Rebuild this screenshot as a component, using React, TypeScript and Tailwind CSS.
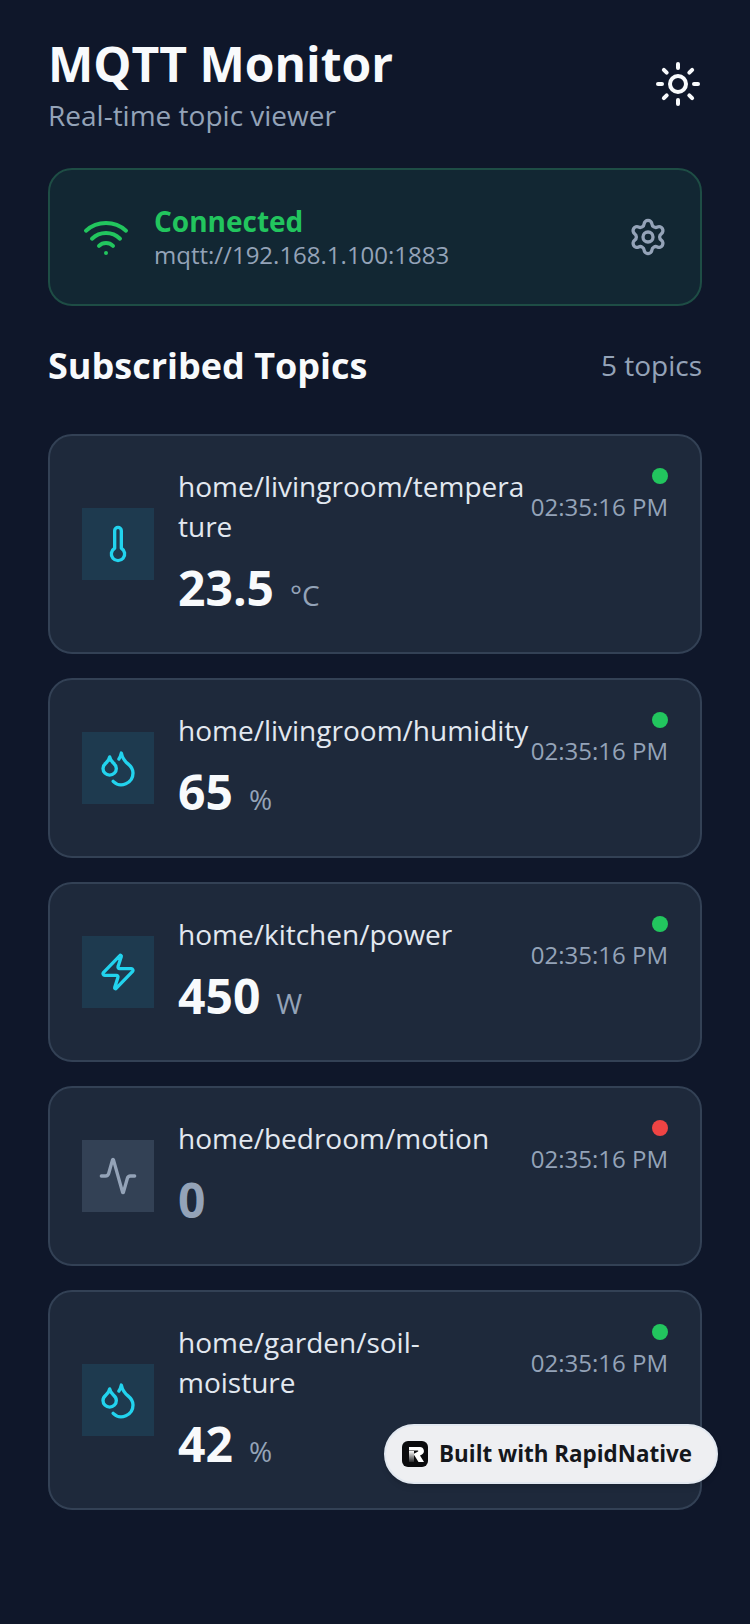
import { Activity, Droplets, Settings, Sun, Thermometer, Wifi, Zap } from 'lucide-react';

const topics = [
  { topic: 'home/livingroom/temperature', value: '23.5', unit: '°C', Icon: Thermometer, active: true },
  { topic: 'home/livingroom/humidity', value: '65', unit: '%', Icon: Droplets, active: true },
  { topic: 'home/kitchen/power', value: '450', unit: 'W', Icon: Zap, active: true },
  { topic: 'home/bedroom/motion', value: '0', unit: '', Icon: Activity, active: false },
  { topic: 'home/garden/soil-moisture', value: '42', unit: '%', Icon: Droplets, active: true },
];

const App = () => {
  return (
    <div className="relative h-[1624px] overflow-hidden bg-[#0f172a] px-12 pt-8 font-['Open_Sans',sans-serif]">
      {/* Header */}
      <div className="flex items-center justify-between">
        <div>
          <h1 className="text-[48px] leading-[64px] font-bold text-[#f8fafc]">MQTT Monitor</h1>
          <p className="text-[28px] leading-[38px] text-[#94a3b8]">Real-time topic viewer</p>
        </div>
        <Sun size={48} strokeWidth={2} className="mt-[2px] text-[#f8fafc]" />
      </div>

      {/* Connection status */}
      <div className="mt-[34px] flex items-center rounded-[24px] border-2 border-[#1e4d45] bg-[#122733] p-8">
        <Wifi size={48} strokeWidth={2} className="text-[#22c55e]" />
        <div className="ml-6 flex-1">
          <p className="text-[28px] leading-[38px] font-bold text-[#22c55e]">Connected</p>
          <p className="mb-[2px] text-[24px] leading-[30px] text-[#94a3b8]">mqtt://192.168.1.100:1883</p>
        </div>
        <Settings size={40} strokeWidth={2} className="text-[#94a3b8]" />
      </div>

      {/* Section title */}
      <div className="mt-9 mb-11 flex items-center justify-between">
        <h2 className="text-[36px] leading-[48px] font-bold text-[#f8fafc]">Subscribed Topics</h2>
        <span className="mb-[2px] text-[28px] leading-[36px] text-[#94a3b8]">5 topics</span>
      </div>

      {/* Topic cards */}
      <div className="flex flex-col gap-6">
        {topics.map(({ topic, value, unit, Icon, active }) => (
          <div key={topic} className="flex items-start rounded-[24px] border-2 border-[#334155] bg-[#1e293b] p-8">
            <div className="flex flex-1 min-w-0 items-center gap-6 self-center">
              <div className={`flex h-[72px] w-[72px] shrink-0 items-center justify-center ${active ? 'bg-[#1e3a4f]' : 'bg-[#334155]'}`}>
                <Icon size={40} strokeWidth={2} className={active ? 'text-[#22d3ee]' : 'text-[#94a3b8]'} />
              </div>
              <div className="min-w-0 flex-1 pb-[3px]">
                <p className="-mt-[2px] text-[28px] leading-[40px] text-[#e2e8f0] [overflow-wrap:anywhere]">{topic}</p>
                <div className="mt-[13px] flex items-baseline gap-4">
                  <span className={`text-[48px] leading-[58px] font-bold ${active ? 'text-[#f8fafc]' : 'text-[#94a3b8]'}`}>{value}</span>
                  {unit && <span className="text-[28px] text-[#94a3b8]">{unit}</span>}
                </div>
              </div>
            </div>
            <div className="flex shrink-0 flex-col items-end gap-[7px]">
              <span className={`h-4 w-4 rounded-full ${active ? 'bg-[#22c55e]' : 'bg-[#ef4444]'}`} />
              <span className="text-[24px] leading-[32px] text-[#94a3b8]">02:35:16 PM</span>
            </div>
          </div>
        ))}
      </div>

      {/* Badge */}
      <div className="absolute top-[1424px] right-[32px] flex h-[60px] items-center gap-[11px] rounded-full border-2 border-[#e2e8f0] bg-[#eeeff2] pr-6 pl-4 shadow-md">
        <svg width="26" height="26" viewBox="0 0 26 26">
          <defs>
            <linearGradient id="stem" x1="0" y1="0" x2="0" y2="1">
              <stop offset="0" stopColor="#ffffff" />
              <stop offset="1" stopColor="#2a2a2c" />
            </linearGradient>
          </defs>
          <rect width="26" height="26" rx="6" fill="#0b0b0d" />
          <path d="M7 6h11a4 4 0 0 1 2 7.4l-2 1 4 6.6h-5.5l-5-8 4.5-2.5c.5-.3.3-1-.3-1H7z" fill="#ffffff" />
          <path d="M7 10h5v11H7z" fill="url(#stem)" />
        </svg>
        <span className="text-[22.4px] font-bold text-[#15171c]">Built with RapidNative</span>
      </div>
    </div>
  );
};

export default App;
